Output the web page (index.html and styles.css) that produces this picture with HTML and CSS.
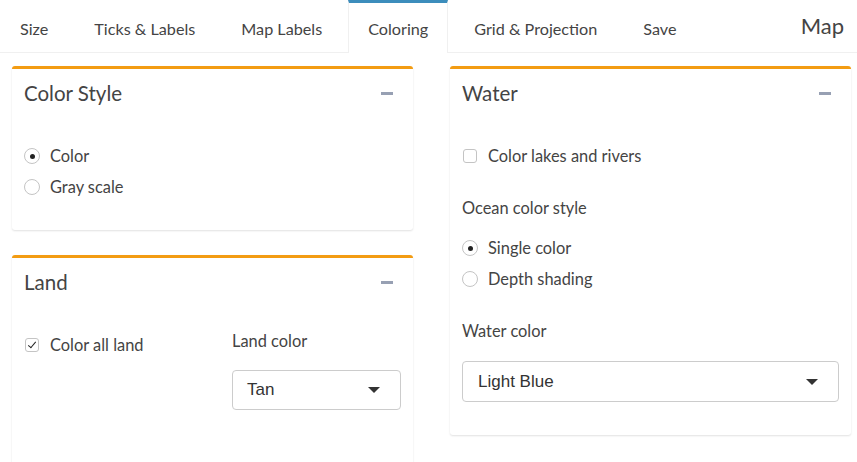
FILE: index.html
```html
<!DOCTYPE html>
<html lang="en">
<head>
  <meta charset="UTF-8">
  <meta name="viewport" content="width=device-width, initial-scale=1.0">
  <title>Map</title>
  <link rel="stylesheet" href="styles.css">
</head>
<body>
  <!-- Tabs -->
  <div class="tabbar">
    <a class="tab" href="#">Size</a>
    <a class="tab" href="#">Ticks &amp; Labels</a>
    <a class="tab" href="#">Map Labels</a>
    <a class="tab active" href="#">Coloring</a>
    <a class="tab" href="#">Grid &amp; Projection</a>
    <a class="tab" href="#">Save</a>
    <div class="tab-title">Map</div>
  </div>

  <div class="content">
    <div class="column">
      <!-- Color Style -->
      <div class="box">
        <div class="box-header">
          <h3 class="box-title">Color Style</h3>
          <span class="collapse"></span>
        </div>
        <div class="box-body">
          <div class="group">
            <div class="option"><span class="radio checked"></span>Color</div>
            <div class="option"><span class="radio"></span>Gray scale</div>
          </div>
        </div>
      </div>

      <!-- Land -->
      <div class="box tall">
        <div class="box-header">
          <h3 class="box-title">Land</h3>
          <span class="collapse"></span>
        </div>
        <div class="box-body">
          <div class="split">
            <div class="group">
              <div class="option"><span class="check checked"></span>Color all land</div>
            </div>
            <div class="group lifted">
              <div class="group-label">Land color</div>
              <div class="select">Tan<span class="caret"></span></div>
            </div>
          </div>
        </div>
      </div>
    </div>

    <div class="column">
      <!-- Water -->
      <div class="box">
        <div class="box-header">
          <h3 class="box-title">Water</h3>
          <span class="collapse"></span>
        </div>
        <div class="box-body">
          <div class="group">
            <div class="option"><span class="check"></span>Color lakes and rivers</div>
          </div>
          <div class="group">
            <div class="group-label">Ocean color style</div>
            <div class="option"><span class="radio checked"></span>Single color</div>
            <div class="option"><span class="radio"></span>Depth shading</div>
          </div>
          <div class="group">
            <div class="group-label">Water color</div>
            <div class="select wide">Light Blue<span class="caret"></span></div>
          </div>
        </div>
      </div>
    </div>
  </div>
</body>
</html>
```

FILE: styles.css
```css
body {
  font-family: Lato, "Liberation Sans", sans-serif;
  color: #444;
  background-color: #fff;
  margin: 0;
  padding: 0;
}

.tabbar {
  display: flex;
  align-items: flex-start;
  height: 52px;
  border-bottom: 1px solid #f0f0f0;
}

.tab {
  color: #444;
  text-decoration: none;
  font-size: 16.2px;
  line-height: 20px;
  padding: 16px 19px 13px;
  margin-right: 6px;
  border-top: 3px solid transparent;
  border-left: 1px solid transparent;
  border-right: 1px solid transparent;
}

.tab.active {
  border-top-color: #3c8dbc;
  border-left-color: #f0f0f0;
  border-right-color: #f0f0f0;
  background-color: #fff;
  height: 20px;
  padding-bottom: 14px;
}

.tab-title {
  margin-left: auto;
  padding: 13px 13px 0 0;
  font-size: 22px;
  line-height: 26px;
  color: #444;
}

.content {
  display: grid;
  grid-template-columns: 1fr 1fr;
  column-gap: 37px;
  padding: 13px 6px 0 12px;
}

.column {
  display: flex;
  flex-direction: column;
  gap: 25px;
}

.box {
  border-top: 3px solid #f39c12;
  border-radius: 3px;
  background-color: #fff;
  box-shadow: 0 1px 2px rgba(0, 0, 0, 0.12);
}

.box-header {
  display: flex;
  align-items: center;
  justify-content: space-between;
  padding: 12px 20px 8px 12px;
}

.box-title {
  margin: 0;
  font-size: 20.5px;
  line-height: 24px;
  font-weight: normal;
  color: #444;
}

.collapse {
  width: 12px;
  height: 3px;
  background-color: #97a0b3;
}

.box-body {
  padding: 33px 12px 33px;
  font-size: 16.4px;
}

.box.tall .box-body {
  padding-bottom: 70px;
}

.group + .group {
  margin-top: 32px;
}

.group-label {
  line-height: 20px;
  margin-bottom: 20px;
}

.option {
  display: flex;
  align-items: center;
  line-height: 20px;
}

.option + .option {
  margin-top: 11px;
}

.radio {
  width: 14px;
  height: 14px;
  border: 1px solid #c4c4c4;
  border-radius: 50%;
  margin-right: 10px;
  display: flex;
  align-items: center;
  justify-content: center;
}

.radio.checked::after {
  content: "";
  width: 5px;
  height: 5px;
  border-radius: 50%;
  background-color: #222;
}

.check {
  width: 12px;
  height: 12px;
  border: 1px solid #c4c4c4;
  border-radius: 3px;
  margin: 0 11px 0 1px;
  position: relative;
}

.check.checked::after {
  content: "";
  position: absolute;
  left: 4px;
  top: 1px;
  width: 3px;
  height: 7px;
  border-right: 1.5px solid #222;
  border-bottom: 1.5px solid #222;
  transform: rotate(40deg);
}

.split {
  display: grid;
  grid-template-columns: 1fr 169px;
  column-gap: 20px;
  align-items: start;
}

.split .group + .group.lifted {
  margin-top: -4px;
}

.lifted .group-label {
  margin-bottom: 19px;
}

.select {
  display: flex;
  align-items: center;
  justify-content: space-between;
  height: 38px;
  border: 1px solid #ccc;
  border-radius: 4px;
  padding: 0 20px 0 14px;
  font-family: "Liberation Sans", Arial, sans-serif;
  font-size: 17px;
  color: #333;
}

.select.wide {
  height: 39px;
  padding-left: 15px;
}

.caret {
  width: 0;
  height: 0;
  border-left: 6px solid transparent;
  border-right: 6px solid transparent;
  border-top: 6px solid #333;
}
```
